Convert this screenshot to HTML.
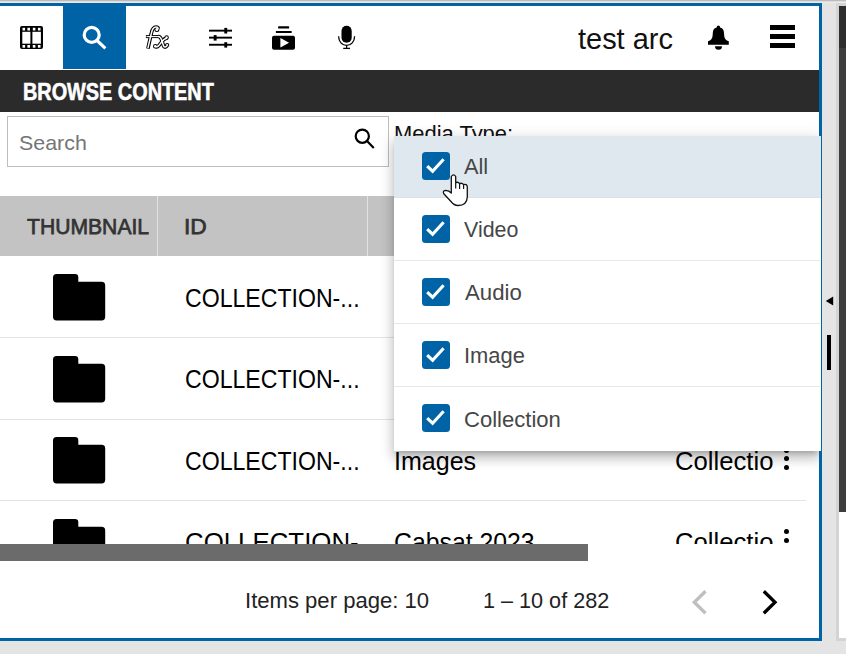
<!DOCTYPE html>
<html><head><meta charset="utf-8">
<style>
*{margin:0;padding:0;box-sizing:border-box}
html,body{width:846px;height:654px;overflow:hidden;background:#e4e4e4;font-family:"Liberation Sans",sans-serif}
.a{position:absolute}
.t{position:absolute;white-space:nowrap;line-height:1;transform-origin:0 0}
#topg{left:0;top:0;width:846px;height:1px;background:#bcbcbc}
#topg2{left:0;top:1px;width:846px;height:1px;background:#dcdcdc}
#topg3{left:0;top:2px;width:846px;height:1px;background:#eee9e6}
#frame{left:-10px;top:3px;width:832px;height:638px;border:3px solid #0063a6;background:#fff;overflow:hidden}
#rstrip{left:836px;top:3px;width:10px;height:638px;background:#d4d4d4}
#rwhite{left:839px;top:6px;width:7px;height:632px;background:#fff}
#rdark1{left:839px;top:6px;width:7px;height:42px;background:#2e2e2e}
#rdark2{left:839px;top:48px;width:7px;height:464px;background:#3d3d3d}
#bot{left:0;top:641px;width:846px;height:13px;background:#e4e4e4}
</style></head><body>
<div class="a" id="topg"></div><div class="a" id="topg2"></div><div class="a" id="topg3"></div>
<div class="a" id="rstrip"></div>
<div class="a" id="rwhite"></div>
<div class="a" id="rdark1"></div>
<div class="a" id="rdark2"></div>

<!-- app frame (coordinates inside are page coords via wrapper) -->
<div class="a" id="frame"></div>
<div class="a" id="app" style="left:0;top:6px;width:819px;height:632px;overflow:hidden;background:#fff">
 <div class="a" style="left:0;top:-6px;width:819px;height:654px">
  <!-- toolbar -->
  <div class="a" style="left:63px;top:6px;width:63px;height:63px;background:#0063a6"></div>
  <!-- film icon -->
  <svg class="a" style="left:20px;top:26px" width="23" height="23" viewBox="0 0 23 23">
   <rect x="0" y="0" width="23" height="23" rx="2" fill="#000"/>
   <g fill="#fff">
    <rect x="2.5" y="1.8" width="2.6" height="2.7"/><rect x="7.4" y="1.8" width="2.6" height="2.7"/>
    <rect x="12.8" y="1.8" width="2.6" height="2.7"/><rect x="17.9" y="1.8" width="2.6" height="2.7"/>
    <rect x="2.5" y="19" width="2.6" height="2.7"/><rect x="7.4" y="19" width="2.6" height="2.7"/>
    <rect x="12.8" y="19" width="2.6" height="2.7"/><rect x="17.9" y="19" width="2.6" height="2.7"/>
    <rect x="2.3" y="5.8" width="8.1" height="11.9"/><rect x="12.4" y="5.8" width="8.5" height="11.9"/>
   </g>
  </svg>
  <!-- search icon (white) -->
  <svg class="a" style="left:63px;top:6px" width="63" height="63" viewBox="63 6 63 63">
   <circle cx="91.7" cy="34.9" r="7.5" fill="none" stroke="#fff" stroke-width="3.2"/>
   <line x1="97" y1="40.5" x2="105.4" y2="48.4" stroke="#fff" stroke-width="3.1"/>
  </svg>
  <!-- fx icon -->
  <svg class="a" style="left:144px;top:24px" width="28" height="28" viewBox="0 0 28 28">
   <g id="fxg" fill="none" stroke-linejoin="round">
    <g stroke="#000" stroke-width="3.6">
     <path d="M3.9 24.6 L7.3 9.5 C8.2 5 9.8 3.1 12 3.1 C13.4 3.1 14.2 3.9 14.4 4.8" />
     <path d="M1.9 12.6 L15 12.6" stroke-width="3"/>
     <path d="M14.5 12.5 C16.5 12.5 17 14 17.8 16.5 L19.4 21.5 C20 23.4 21.3 23.6 22.6 22.2" stroke-linecap="round"/>
     <path d="M22.3 14.4 C20.4 14.4 19.2 15.8 17.6 18 L14.8 21.6 C13.8 22.8 12.7 23.1 11.6 22.6" stroke-linecap="round"/>
    </g>
    <g fill="#000"><circle cx="12.9" cy="5.4" r="2.5"/><circle cx="23.2" cy="21" r="2.1"/><circle cx="22.6" cy="13.4" r="2.2"/><circle cx="11.3" cy="22.2" r="2.3"/></g>
    <g stroke="#fff" stroke-width="1.5">
     <path d="M3.9 24.1 L7.3 9.5 C8.2 5 9.8 3.1 12 3.1 C13.4 3.1 14.2 3.9 14.4 4.8" />
     <path d="M2.4 12.6 L15 12.6" stroke-width="1.1"/>
     <path d="M14.5 12.5 C16.5 12.5 17 14 17.8 16.5 L19.4 21.5 C20 23.4 21.3 23.6 22.6 22.2" stroke-linecap="round"/>
     <path d="M22.3 14.4 C20.4 14.4 19.2 15.8 17.6 18 L14.8 21.6 C13.8 22.8 12.7 23.1 11.6 22.6" stroke-linecap="round"/>
    </g>
    <g fill="#fff"><circle cx="12.9" cy="5.4" r="1.5"/><circle cx="23.2" cy="21" r="1.1"/><circle cx="22.6" cy="13.4" r="1.2"/><circle cx="11.3" cy="22.2" r="1.3"/></g>
   </g>
  </svg>
  <!-- sliders -->
  <svg class="a" style="left:203px;top:20px" width="36" height="36" viewBox="203 20 36 36">
   <g fill="#000">
    <rect x="209" y="29.7" width="23" height="1.9"/>
    <rect x="209" y="36.7" width="23" height="1.9"/>
    <rect x="209" y="43.8" width="23" height="1.9"/>
    <rect x="224.3" y="27.9" width="2.9" height="5.6"/>
    <rect x="213.7" y="35.1" width="2.9" height="5.5"/>
    <rect x="224.3" y="42.2" width="2.9" height="5.4"/>
   </g>
  </svg>
  <!-- playlist -->
  <svg class="a" style="left:266px;top:20px" width="36" height="36" viewBox="266 20 36 36">
   <rect x="272" y="35.7" width="23" height="14" rx="2" fill="#000"/>
   <path d="M280.4 37.9 L289.1 42.7 L280.4 47.5 Z" fill="#fff"/>
   <rect x="278.1" y="26.2" width="11" height="2.3" rx="0.6" fill="#000"/>
   <rect x="275.8" y="31" width="16" height="1.9" rx="0.6" fill="#000"/>
  </svg>
  <!-- mic -->
  <svg class="a" style="left:329px;top:20px" width="36" height="36" viewBox="329 20 36 36">
   <rect x="341.5" y="25.8" width="10.2" height="17" rx="5.1" fill="#000"/>
   <path d="M338.6 36.3 A8 9.2 0 0 0 354.6 36.3" fill="none" stroke="#000" stroke-width="1.25"/>
   <line x1="346.6" y1="45" x2="346.6" y2="48.5" stroke="#000" stroke-width="1.2"/>
   <line x1="343.2" y1="48.4" x2="350" y2="48.4" stroke="#000" stroke-width="1.3"/>
  </svg>
  <span class="t" id="t0" style="left:578.20px;top:25.25px;font-size:29px;font-weight:normal;color:#111;transform:scaleX(0.9979)">test arc</span>
  <!-- bell -->
  <svg class="a" style="left:700px;top:20px" width="36" height="36" viewBox="0 0 36 36">
   <g transform="translate(8,5.3)" fill="#000">
    <circle cx="10.4" cy="1.9" r="1.7"/>
    <path d="M10.4 2.2 C7 2.2 5.2 3.6 4.9 6.8 L4.6 10.5 C4.3 13.5 3 15 0 16 L0 19.5 L20.8 19.5 L20.8 16 C17.8 15 16.5 13.5 16.2 10.5 L15.9 6.8 C15.6 3.6 13.8 2.2 10.4 2.2 Z"/>
    <path d="M7 21 L14 21 A3.5 3.5 0 0 1 7 21 Z"/>
   </g>
  </svg>
  <!-- hamburger -->
  <div class="a" style="left:770px;top:25.2px;width:25px;height:5.3px;background:#000"></div>
  <div class="a" style="left:770px;top:33.9px;width:25px;height:5.3px;background:#000"></div>
  <div class="a" style="left:770px;top:42.6px;width:25px;height:5.3px;background:#000"></div>

  <!-- title bar -->
  <div class="a" style="left:0;top:70px;width:819px;height:42px;background:#2b2b2b"></div>
  <span class="t" id="t1" style="left:23.32px;top:80.72px;font-size:23.6px;font-weight:bold;-webkit-text-stroke:0.6px #fff;color:#fff;transform:scaleX(0.8415)">BROWSE CONTENT</span>

  <!-- search box -->
  <div class="a" style="left:7px;top:116px;width:382px;height:51px;border:1px solid #bdbdbd"></div>
  <span class="t" id="t2" style="left:19.37px;top:132.12px;font-size:21px;font-weight:normal;color:#757575;transform:scaleX(1.0188)">Search</span>
  <svg class="a" style="left:350px;top:124px" width="30" height="30" viewBox="350 124 30 30">
   <circle cx="362.3" cy="136.2" r="6.6" fill="none" stroke="#000" stroke-width="2.2"/>
   <line x1="367" y1="141" x2="373.8" y2="148" stroke="#000" stroke-width="2.2"/>
  </svg>
  <span class="t" id="t3" style="left:394.16px;top:124.30px;font-size:21.5px;font-weight:normal;color:#111;transform:scaleX(1.0203)">Media Type:</span>

  <!-- table header -->
  <div class="a" style="left:0;top:196px;width:819px;height:60px;background:#c3c3c3"></div>
  <div class="a" style="left:157px;top:196px;width:1px;height:60px;background:#e2e2e2"></div>
  <div class="a" style="left:367px;top:196px;width:1px;height:60px;background:#e2e2e2"></div>
  <span class="t" id="t4" style="left:26.62px;top:216.27px;font-size:22px;font-weight:normal;-webkit-text-stroke:0.75px #333;color:#333;transform:scaleX(0.9604)">THUMBNAIL</span>
  <span class="t" id="t5" style="left:183.93px;top:216.27px;font-size:22px;font-weight:normal;-webkit-text-stroke:0.75px #333;color:#333;transform:scaleX(1.0369)">ID</span>

  <!-- table body -->
  <div class="a" id="tbody" style="left:0;top:256px;width:819px;height:288px;overflow:hidden">
   <div class="a" style="left:0;top:-256px;width:819px;height:700px">
    <div class="a" style="left:0;top:337px;width:806px;height:1px;background:#e3e3e3"></div>
    <div class="a" style="left:0;top:419px;width:806px;height:1px;background:#e3e3e3"></div>
    <div class="a" style="left:0;top:500px;width:806px;height:1px;background:#e3e3e3"></div>
    <!-- folders -->
    <svg class="a" style="left:52.8px;top:274px" width="54" height="47" viewBox="0 0 54 47"><path d="M3.5 0 H22 Q25.3 0 25.3 3.3 V7.8 H48.6 Q52.2 7.8 52.2 11.4 V42.8 Q52.2 46.4 48.6 46.4 H3.6 Q0 46.4 0 42.8 V3.5 Q0 0 3.5 0Z" fill="#000"/></svg>
    <svg class="a" style="left:52.8px;top:355.5px" width="54" height="47" viewBox="0 0 54 47"><path d="M3.5 0 H22 Q25.3 0 25.3 3.3 V7.8 H48.6 Q52.2 7.8 52.2 11.4 V42.8 Q52.2 46.4 48.6 46.4 H3.6 Q0 46.4 0 42.8 V3.5 Q0 0 3.5 0Z" fill="#000"/></svg>
    <svg class="a" style="left:52.8px;top:437px" width="54" height="47" viewBox="0 0 54 47"><path d="M3.5 0 H22 Q25.3 0 25.3 3.3 V7.8 H48.6 Q52.2 7.8 52.2 11.4 V42.8 Q52.2 46.4 48.6 46.4 H3.6 Q0 46.4 0 42.8 V3.5 Q0 0 3.5 0Z" fill="#000"/></svg>
    <svg class="a" style="left:52.8px;top:518.5px" width="54" height="47" viewBox="0 0 54 47"><path d="M3.5 0 H22 Q25.3 0 25.3 3.3 V7.8 H48.6 Q52.2 7.8 52.2 11.4 V42.8 Q52.2 46.4 48.6 46.4 H3.6 Q0 46.4 0 42.8 V3.5 Q0 0 3.5 0Z" fill="#000"/></svg>
    <span class="t" id="t6" style="left:184.70px;top:285.81px;font-size:25.5px;font-weight:normal;color:#000;transform:scaleX(0.9058)">COLLECTION-...</span>
    <span class="t" id="t7" style="left:184.70px;top:367.11px;font-size:25.5px;font-weight:normal;color:#000;transform:scaleX(0.9058)">COLLECTION-...</span>
    <span class="t" id="t8" style="left:184.70px;top:448.71px;font-size:25.5px;font-weight:normal;color:#000;transform:scaleX(0.9058)">COLLECTION-...</span>
    <span class="t" id="t9" style="left:184.59px;top:529.71px;font-size:25.5px;font-weight:normal;color:#000;transform:scaleX(1.0130)">COLLECTION-...</span>
    <span class="t" id="t10" style="left:394.04px;top:448.91px;font-size:25.5px;font-weight:normal;color:#000;transform:scaleX(0.9814)">Images</span>
    <span class="t" id="t11" style="left:394.44px;top:529.71px;font-size:25.5px;font-weight:normal;color:#000;transform:scaleX(0.9725)">Cabsat 2023</span>
    <span class="t" id="t12" style="left:674.59px;top:448.91px;font-size:25.5px;font-weight:normal;color:#000;transform:scaleX(1.0064)">Collectio</span>
    <span class="t" id="t13" style="left:674.59px;top:529.71px;font-size:25.5px;font-weight:normal;color:#000;transform:scaleX(1.0064)">Collectio</span>
    <!-- kebabs -->
    <div class="a" style="left:783.8px;top:447.2px;width:5.4px;height:5.4px;border-radius:50%;background:#000"></div>
    <div class="a" style="left:783.8px;top:456.1px;width:5.4px;height:5.4px;border-radius:50%;background:#000"></div>
    <div class="a" style="left:783.8px;top:465.0px;width:5.4px;height:5.4px;border-radius:50%;background:#000"></div>
    <div class="a" style="left:783.8px;top:528.7px;width:5.4px;height:5.4px;border-radius:50%;background:#000"></div>
    <div class="a" style="left:783.8px;top:537.6px;width:5.4px;height:5.4px;border-radius:50%;background:#000"></div>
    <div class="a" style="left:783.8px;top:546.5px;width:5.4px;height:5.4px;border-radius:50%;background:#000"></div>
   </div>
  </div>
  <!-- h scrollbar -->
  <div class="a" style="left:0;top:544px;width:588px;height:17px;background:#6b6b6b"></div>

  <!-- paginator -->
  <span class="t" id="t14" style="left:245.35px;top:590.70px;font-size:21.5px;font-weight:normal;color:#222;transform:scaleX(1.0266)">Items per page: 10</span>
  <span class="t" id="t15" style="left:483.39px;top:590.70px;font-size:21.5px;font-weight:normal;color:#222;transform:scaleX(1.0057)">1 – 10 of 282</span>
  <svg class="a" style="left:684px;top:586px" width="30" height="32" viewBox="684 586 30 32"><path d="M705.5 591.2 L694.3 602.2 L705.5 613.2" fill="none" stroke="#bfbfbf" stroke-width="3.3"/></svg>
  <svg class="a" style="left:756px;top:586px" width="30" height="32" viewBox="756 586 30 32"><path d="M763.8 591.2 L775 602.2 L763.8 613.2" fill="none" stroke="#000" stroke-width="3.3"/></svg>

  <!-- dropdown -->
  <div class="a" style="left:394px;top:136px;width:426px;height:315px;background:#fff;box-shadow:0 5px 5px -3px rgba(0,0,0,.2),0 8px 10px 1px rgba(0,0,0,.14),0 3px 14px 2px rgba(0,0,0,.12)"></div>
 </div>
</div>

<!-- dropdown overlay (outside app clip so it can cover border) -->
<div class="a" id="dd" style="left:394px;top:136px;width:427px;height:315px;background:#fff">
  <div class="a" style="left:0;top:0;width:427px;height:61px;background:#dee8ee"></div>
  <div class="a" style="left:0;top:61px;width:427px;height:1px;background:#dde1e4"></div>
  <div class="a" style="left:0;top:124px;width:426px;height:1px;background:#e8e8e8"></div>
  <div class="a" style="left:0;top:187px;width:426px;height:1px;background:#e8e8e8"></div>
  <div class="a" style="left:0;top:250px;width:426px;height:1px;background:#e8e8e8"></div>
</div>
<div id="ddc">
 <svg class="a" style="left:422px;top:152.4px" width="28" height="28" viewBox="0 0 28 28"><rect width="28" height="28" rx="3.5" fill="#0063a6"/><path d="M5.2 14.2 L10.6 19.2 L21.6 7.2" fill="none" stroke="#fff" stroke-width="3.1"/></svg>
 <svg class="a" style="left:422px;top:215.4px" width="28" height="28" viewBox="0 0 28 28"><rect width="28" height="28" rx="3.5" fill="#0063a6"/><path d="M5.2 14.2 L10.6 19.2 L21.6 7.2" fill="none" stroke="#fff" stroke-width="3.1"/></svg>
 <svg class="a" style="left:422px;top:278.4px" width="28" height="28" viewBox="0 0 28 28"><rect width="28" height="28" rx="3.5" fill="#0063a6"/><path d="M5.2 14.2 L10.6 19.2 L21.6 7.2" fill="none" stroke="#fff" stroke-width="3.1"/></svg>
 <svg class="a" style="left:422px;top:341.4px" width="28" height="28" viewBox="0 0 28 28"><rect width="28" height="28" rx="3.5" fill="#0063a6"/><path d="M5.2 14.2 L10.6 19.2 L21.6 7.2" fill="none" stroke="#fff" stroke-width="3.1"/></svg>
 <svg class="a" style="left:422px;top:404.4px" width="28" height="28" viewBox="0 0 28 28"><rect width="28" height="28" rx="3.5" fill="#0063a6"/><path d="M5.2 14.2 L10.6 19.2 L21.6 7.2" fill="none" stroke="#fff" stroke-width="3.1"/></svg>
 <span class="t" id="t16" style="left:463.80px;top:157.00px;font-size:21.5px;font-weight:normal;color:#464646;transform:scaleX(1.0131)">All</span>
 <span class="t" id="t17" style="left:463.78px;top:220.10px;font-size:21.5px;font-weight:normal;color:#464646;transform:scaleX(0.9948)">Video</span>
 <span class="t" id="t18" style="left:464.59px;top:283.10px;font-size:21.5px;font-weight:normal;color:#464646;transform:scaleX(1.0334)">Audio</span>
 <span class="t" id="t19" style="left:463.57px;top:346.20px;font-size:21.5px;font-weight:normal;color:#464646;transform:scaleX(1.0194)">Image</span>
 <span class="t" id="t20" style="left:463.57px;top:410.10px;font-size:21.5px;font-weight:normal;color:#464646;transform:scaleX(1.0261)">Collection</span>
</div>

<!-- right scroller indicators -->
<svg class="a" style="left:824px;top:294px" width="12" height="12" viewBox="824 294 12 12"><path d="M825.8 301 L833.2 296.6 L833.2 305.4 Z" fill="#000"/></svg>
<div class="a" style="left:827px;top:335px;width:4.3px;height:35px;background:#000"></div>

<!-- cursor -->
<svg class="a" style="left:440px;top:170px" width="32" height="40" viewBox="0 0 32 40">
 <path d="M11.3 23 L11.3 6.5 Q13.5 3.2 15.7 6.5 L15.7 12.8 Q18 11.3 19.6 13.6 Q22 12.5 23.6 14.6 Q26.8 13.6 27.3 16.8 L27.3 27 Q27 35.5 18 35.5 Q14 35.5 11 31.5 L3.8 23.8 Q2.2 20.6 5.8 20.3 Q9 20.4 11.3 23 Z" fill="#fff" stroke="#111" stroke-width="1.3" stroke-linejoin="round"/>
 <path d="M15.7 12.8 V18.6 M19.6 13.6 V19 M23.6 14.6 V19" stroke="#111" stroke-width="1.2" fill="none"/>
</svg>
</body></html>
